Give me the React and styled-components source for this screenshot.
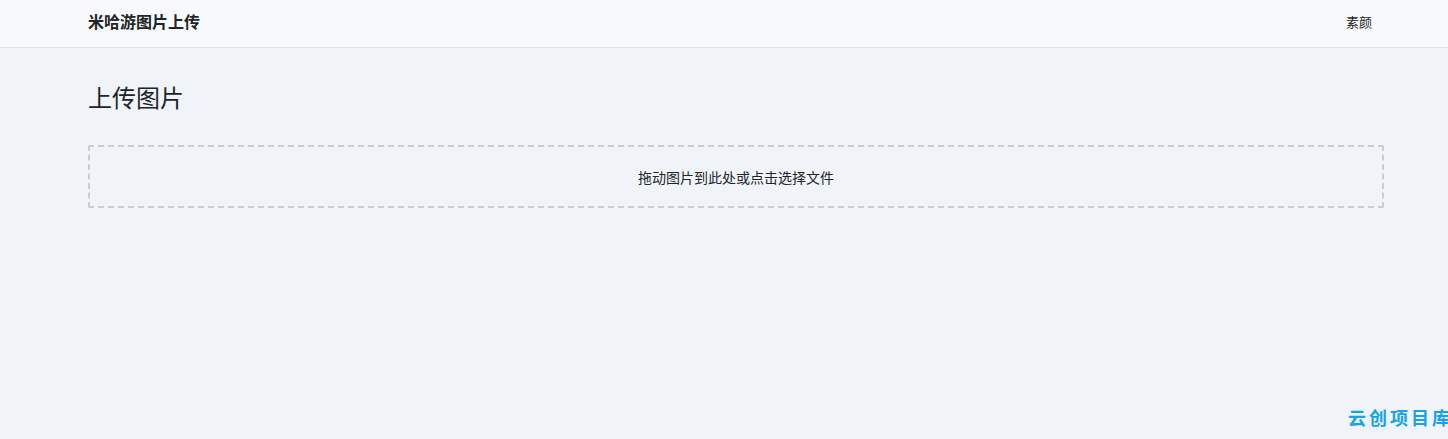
import React from "react";
import styled, { createGlobalStyle } from "styled-components";

const GlobalStyle = createGlobalStyle`
  html, body {
    margin: 0;
    padding: 0;
    background: #f0f3f8;
    font-family: "Noto Sans CJK SC", "Liberation Sans", sans-serif;
    color: #212529;
    overflow: hidden;
  }
`;

const Page = styled.div`
  position: relative;
  width: 100%;
  height: 439px;
  overflow: hidden;
  background: #f0f3f8;
`;

const Header = styled.header`
  height: 48px;
  background: #f8f9fb;
  border-bottom: 1px solid #dee2e6;
  display: flex;
  align-items: center;
  justify-content: space-between;
  padding: 0 76px 0 88px;
  box-sizing: border-box;
`;

const Brand = styled.div`
  font-size: 16px;
  font-weight: 700;
  color: #212529;
  line-height: 1;
  margin-top: -5px;
`;

const NavLink = styled.a`
  font-size: 13px;
  color: #212529;
  text-decoration: none;
  line-height: 1;
  margin-top: -5px;
`;

const Main = styled.main`
  padding: 32px 64px 0 88px;
`;

const Title = styled.h1`
  margin: 0 0 31px;
  font-size: 24px;
  font-weight: 400;
  line-height: 34px;
  color: #212529;
`;

const DropZone = styled.div`
  height: 63px;
  border: 2px dashed #c9ccd0;
  border-radius: 2px;
  display: flex;
  align-items: center;
  justify-content: center;
  box-sizing: border-box;
  font-size: 14px;
  color: #212529;
  cursor: pointer;
`;

const Watermark = styled.div`
  position: absolute;
  left: 1348px;
  bottom: 13px;
  white-space: nowrap;
  font-size: 18px;
  font-weight: 700;
  letter-spacing: 3px;
  color: #17a3e6;
  line-height: 1;
`;

export default function App() {
  return (
    <Page>
      <GlobalStyle />
      <Header>
        <Brand>米哈游图片上传</Brand>
        <NavLink href="#">素颜</NavLink>
      </Header>
      <Main>
        <Title>上传图片</Title>
        <DropZone>拖动图片到此处或点击选择文件</DropZone>
      </Main>
      <Watermark>云创项目库</Watermark>
    </Page>
  );
}
